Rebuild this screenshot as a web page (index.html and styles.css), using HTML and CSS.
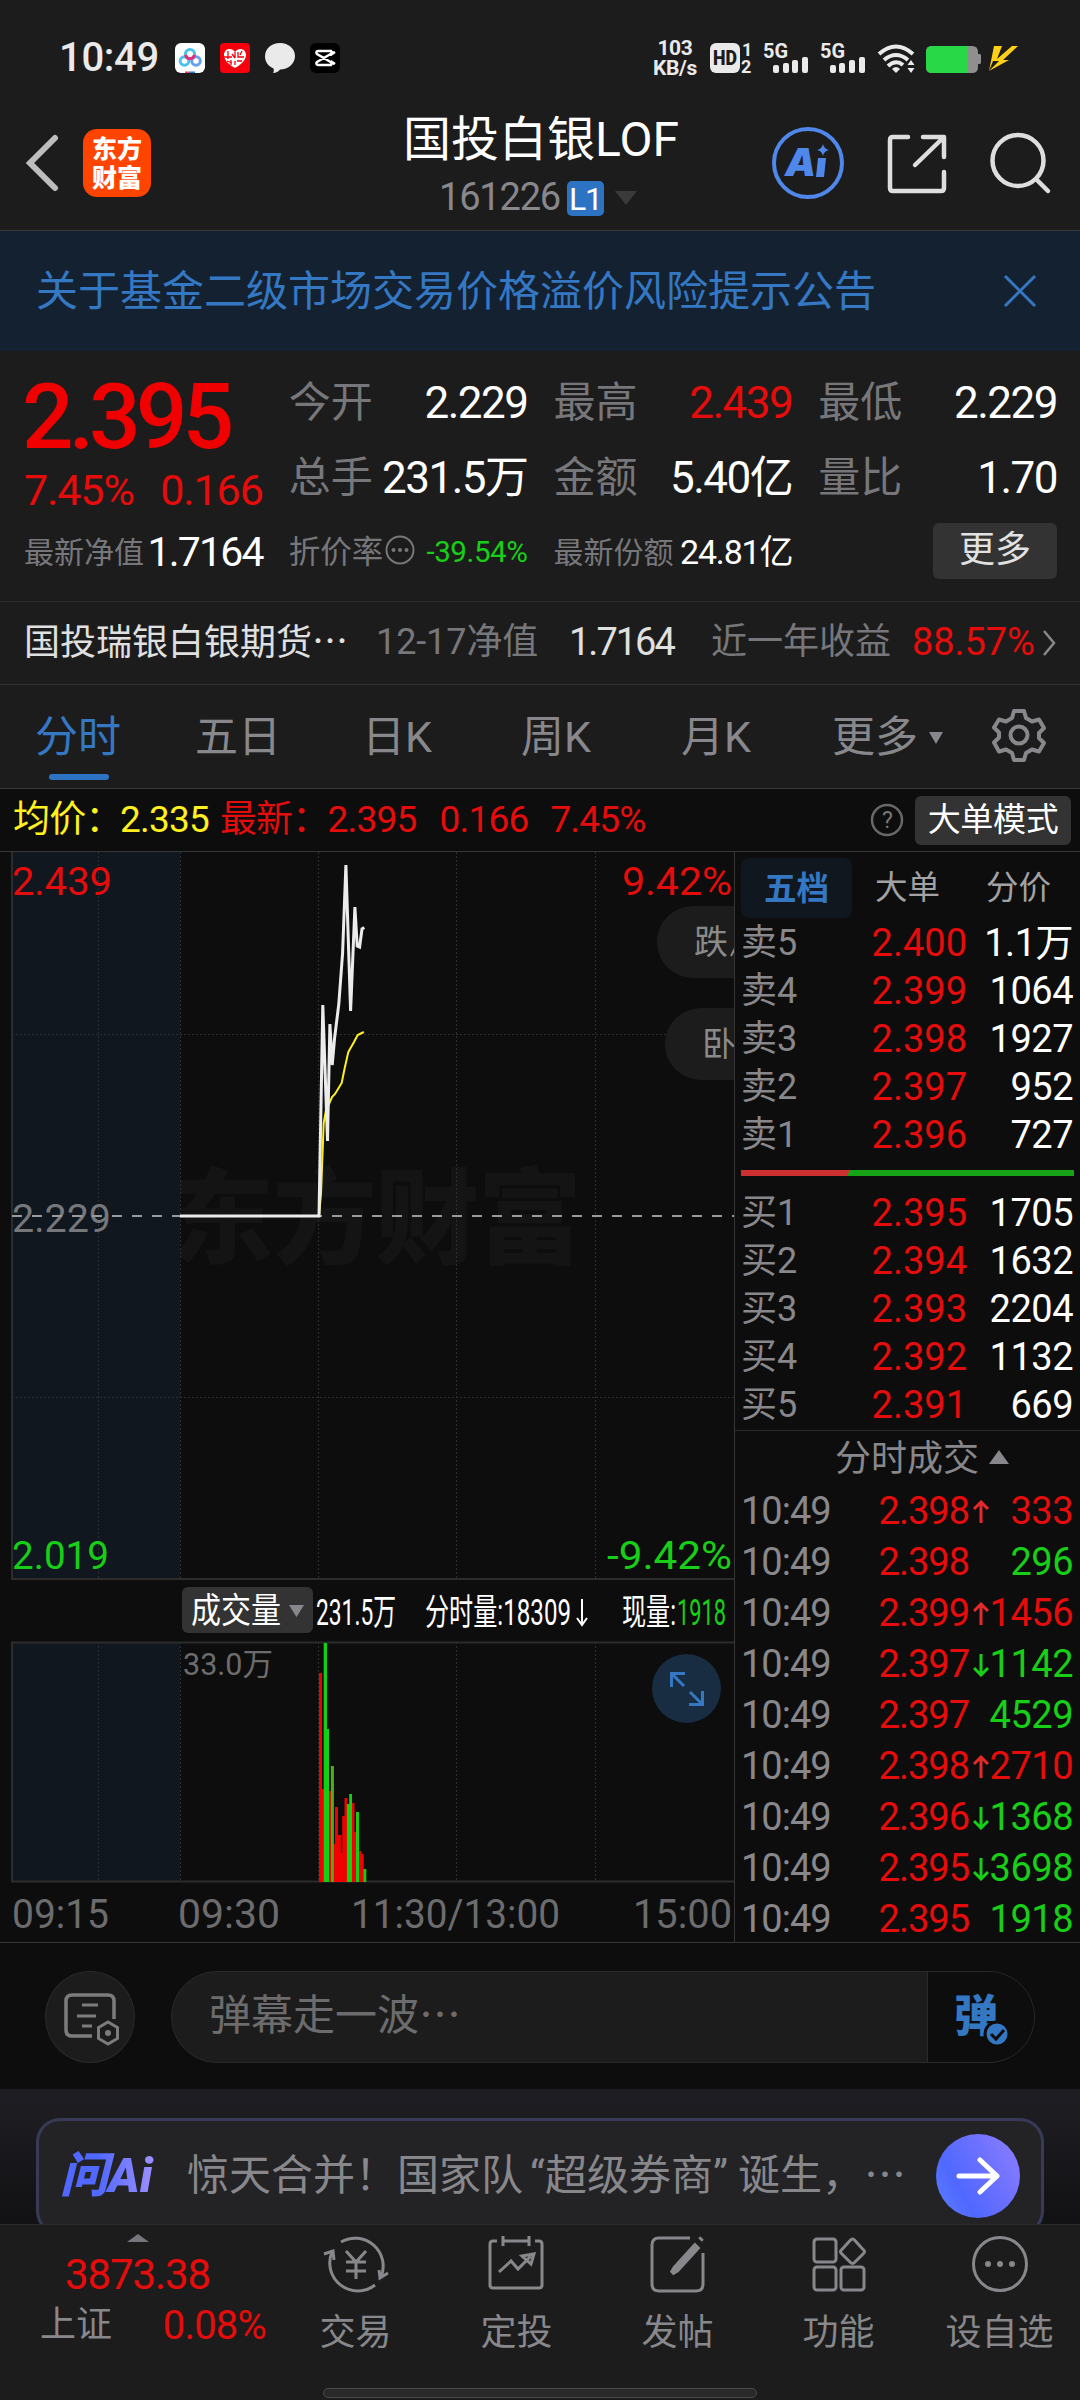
FILE: index.html
```
<!DOCTYPE html>
<html lang="zh-CN">
<head>
    <meta charset="UTF-8">
    <meta name="viewport" content="width=device-width, initial-scale=1.0">
    <title>国投白银LOF</title>
    <link rel="stylesheet" href="styles.css">
</head>
<body>
    <div class="status">
        <span class="clock">10:49</span>
        <svg class="apps" width="166" height="32" viewBox="0 0 166 32">
            <rect x="0" y="1" width="30" height="30" rx="6" fill="#fff"/>
            <g fill="none" stroke-width="3">
                <circle cx="9.5" cy="19" r="4.3" stroke="#4cc3ee"/>
                <circle cx="21" cy="19" r="4.3" stroke="#6aa0f0"/>
                <circle cx="15" cy="12" r="4.6" stroke="#4cc3ee"/>
                <path d="M10.5 13a4.6 4.6 0 0 0 9 0" stroke="#e0307a"/>
            </g>
            <path d="M10 29.5h5v1.5h-5z" fill="#f04060"/>
            <path d="M15 29.5h5v1.5h-5z" fill="#2a7bea"/>
            <rect x="45" y="1" width="30" height="30" rx="4" fill="#f5000c"/>
            <path d="M60 26c-4-2-11-7-11-13 0-7 8-8 11-3 3-5 11-4 11 3 0 6-7 11-11 13z" fill="#fff"/>
            <path d="M49 15h8M53 9v8M57 12l3 4M63 10v5h6M62 19h5M56 18v5M60 10v6M52 19l5 2M60 19v4M67 9l-2 4" stroke="#f5000c" stroke-width="1.3" fill="none"/>
            <path d="M105 1c8.500 0 15 5.600 15 13s-6.500 13.500-15 13.500c-1.500 2-4 3.500-7 3.500 1-1.300 1-2.800.5-4.500C93 24 90 19.500 90 14.500 90 6.600 96.500 1 105 1z" fill="#eaeaea"/>
            <rect x="135" y="1" width="30" height="30" rx="6" fill="#000"/>
            <path d="M160 10l-3 2-1-3h-13c-2 0-2 2-1 3l17 10M160 22l-3-2-1 3h-13c-2 0-2-2-1-3l17-10" fill="none" stroke="#fff" stroke-width="2.500"/>
        </svg>
        <div class="speed">103<br>KB/s</div>
        <svg class="signals" width="312" height="34" viewBox="0 0 312 34">
            <rect x="0" y="2" width="30" height="30" rx="6" fill="#eaeaea"/>
            <text x="3" y="24" class="hd" textLength="24" lengthAdjust="spacingAndGlyphs">HD</text>
            <text x="32" y="15" class="mini">1</text>
            <text x="31" y="32" class="mini">2</text>
            <text x="53" y="17" class="net" textLength="25" lengthAdjust="spacingAndGlyphs">5G</text>
            <text x="110" y="17" class="net" textLength="25" lengthAdjust="spacingAndGlyphs">5G</text>
            <g fill="#eaeaea">
                <rect x="63" y="24" width="6" height="8" rx="2"/><rect x="73" y="22" width="6" height="10" rx="2"/><rect x="82" y="19" width="6" height="13" rx="2"/><rect x="92" y="16" width="6" height="16" rx="2"/>
                <rect x="120" y="24" width="6" height="8" rx="2"/><rect x="129" y="22" width="6" height="10" rx="2"/><rect x="139" y="19" width="6" height="13" rx="2"/><rect x="149" y="16" width="6" height="16" rx="2"/>
                <path d="M182 28q4-4 8 0l-4 4z"/>
                <path d="M201 19l3.500 5h-7zM201 32l3.500-5h-7z"/>
            </g>
            <path d="M169 13q17-15 34 0M174 19q12-10 24 0M178 25q8-7 15-1" fill="none" stroke="#eaeaea" stroke-width="4"/>
            <path d="M222 5h40q6 0 6 6v2h2q1 0 1 2v6q0 2-1 2h-2v3q0 6-6 6h-40q-6 0-6-6V11q0-6 6-6z" fill="#8f8f8f"/>
            <path d="M222 5h36v27h-36q-6 0-6-6V11q0-6 6-6z" fill="#28d846"/>
            <path d="M284 5h8l-5 13 15-13h6l-15 14h6l-20 11 10-10h-6l-4 10z" fill="#ffd015"/>
        </svg>
    </div>

    <div class="header">
        <svg class="back" width="36" height="60" viewBox="0 0 36 60"><path d="M31 5L6 30l25 25" fill="none" stroke="#bdbdbd" stroke-width="6" stroke-linecap="round"/></svg>
        <div class="logo">东方<br>财富</div>
        <div class="title">
            <div class="name">国投白银LOF</div>
            <div class="code">161226<b>L1</b><svg width="24" height="16" viewBox="0 0 24 16"><path d="M1 1h22L12 15z" fill="#3a3a3a"/></svg></div>
        </div>
        <svg class="actions" width="290" height="80" viewBox="0 0 290 80">
            <g fill="#4f88ea">
                <circle cx="38" cy="40" r="34" fill="none" stroke="#4f88ea" stroke-width="4"/>
                <text x="15" y="53" class="ai-small">A</text>
                <path d="M48 35h8l-2 19h-8z"/>
                <path d="M53 21q1 5 6 6-5 1-6 6-1-5-6-6 5-1 6-6z"/>
            </g>
            <g fill="none" stroke="#dedede" stroke-width="4.500" stroke-linecap="round" stroke-linejoin="round">
                <path d="M138 14h-15q-3 0-3 3v48q0 3 3 3h48q3 0 3-3V49M153 14h21v20M173 15l-28 27"/>
                <circle cx="248" cy="37.500" r="25.500"/>
                <path d="M266 56l12 12"/>
            </g>
        </svg>
    </div>

    <div class="banner">
        <span>关于基金二级市场交易价格溢价风险提示公告</span>
        <svg width="34" height="34" viewBox="0 0 34 34"><path d="M2 2l30 30M32 2L2 32" stroke="#3478c4" stroke-width="3"/></svg>
    </div>

    <div class="quote">
        <div class="main-price">
            <div class="price">2.395</div>
            <div class="change"><span>7.45%</span><span>0.166</span></div>
        </div>
        <div class="cell"><label>今开</label><span>2.229</span></div>
        <div class="cell"><label>最高</label><span class="up">2.439</span></div>
        <div class="cell"><label>最低</label><span>2.229</span></div>
        <div class="cell"><label>总手</label><span>231.5万</span></div>
        <div class="cell"><label>金额</label><span>5.40亿</span></div>
        <div class="cell"><label>量比</label><span>1.70</span></div>
        <div class="cell small nav"><label>最新净值</label><span>1.7164</span></div>
        <div class="cell small rate"><label>折价率</label><svg width="30" height="30" viewBox="0 0 30 30"><circle cx="15" cy="15" r="13.500" fill="none" stroke="#77777b" stroke-width="2"/><g fill="#77777b"><circle cx="8.500" cy="15" r="2"/><circle cx="15" cy="15" r="2"/><circle cx="21.500" cy="15" r="2"/></g></svg><span class="down">-39.54%</span></div>
        <div class="cell small share"><label>最新份额</label><span>24.81亿</span></div>
        <div class="cell more"><button>更多</button></div>
    </div>

    <div class="fund">
        <span class="fund-name">国投瑞银白银期货<i>…</i></span>
        <span class="fund-date">12-17净值</span>
        <span class="fund-nav">1.7164</span>
        <span class="fund-year">近一年收益</span>
        <span class="fund-gain up">88.57%</span>
        <svg width="14" height="28" viewBox="0 0 14 28"><path d="M2 2l10 12L2 26" fill="none" stroke="#88888c" stroke-width="2.500"/></svg>
    </div>

    <div class="tabs">
        <span class="tab active">分时</span>
        <span class="tab">五日</span>
        <span class="tab">日K</span>
        <span class="tab">周K</span>
        <span class="tab">月K</span>
        <span class="tab">更多<svg width="16" height="14" viewBox="0 0 16 14"><path d="M1 1h14L8 13z" fill="#88888c"/></svg></span>
        <svg class="gear" width="54" height="54" viewBox="0 0 54 54">
            <g fill="none" stroke="#88888c" stroke-width="4" stroke-linejoin="round">
                <path d="M22 3h10l2 7 6 3.500 7-2 5 8.500-5 5v5l5 5-5 8.500-7-2-6 3.500-2 7H22l-2-7-6-3.500-7 2L2 34.500l5-5v-5l-5-5L7 11.500l7 2 6-3.500z"/>
                <circle cx="27" cy="27" r="8.500"/>
            </g>
        </svg>
    </div>

    <div class="info">
        <span class="avg">均价：</span><span class="avg-num">2.335</span>
        <span class="up">最新：</span><span class="n1 up">2.395</span><span class="n2 up">0.166</span><span class="n3 up">7.45%</span>
        <svg width="34" height="34" viewBox="0 0 34 34"><circle cx="17" cy="17" r="15" fill="none" stroke="#68686a" stroke-width="2.500"/><text x="17" y="25" text-anchor="middle" font-size="23" fill="#77777b">?</text></svg>
        <button>大单模式</button>
    </div>

    <div class="market">
        <div class="chart">
            <svg width="735" height="1090" viewBox="0 852 735 1090">
                <text x="170" y="1256" class="watermark" textLength="412">东方财富</text>
                <rect x="12" y="852" width="168" height="727" fill="#10171f"/>
                <rect x="12" y="1642" width="168" height="240" fill="#10171f"/>
                <g class="grid">
                    <path d="M98.500 852V1579M180.500 852V1579M318.500 852V1579M456.500 852V1579M595.500 852V1579"/>
                    <path d="M98.500 1642V1882M180.500 1642V1882M318.500 1642V1882M456.500 1642V1882M595.500 1642V1882"/>
                    <path d="M12 1034.500H734M12 1397.500H734"/>
                </g>
                <g class="frame">
                    <path d="M12 852V1579H734"/>
                    <path d="M734 1642.500H12V1881.500H734"/>
                </g>
                <rect x="657" y="906" width="120" height="72" rx="36" fill="#1c1c1c"/>
                <rect x="665" y="1008" width="120" height="72" rx="36" fill="#1c1c1c"/>
                <text x="694" y="954" class="pill">跌</text>
                <path d="M731 956l4-8" stroke="#8a8a8a" stroke-width="2"/>
                <text x="702" y="1056" class="pill">卧</text>

                <text x="12" y="895" class="axis red" textLength="100" lengthAdjust="spacingAndGlyphs">2.439</text>
                <text x="622" y="895" class="axis red" textLength="110" lengthAdjust="spacingAndGlyphs">9.42%</text>
                <text x="12" y="1232" class="axis gray" textLength="99" lengthAdjust="spacingAndGlyphs">2.229</text>
                <text x="12" y="1569" class="axis green" textLength="97" lengthAdjust="spacingAndGlyphs">2.019</text>
                <text x="607" y="1569" class="axis green" textLength="125" lengthAdjust="spacingAndGlyphs">-9.42%</text>

                <path d="M12 1216H734" stroke="#9a9a9a" stroke-width="2" stroke-dasharray="10 10"/>
                <polyline class="avg-line" points="180,1216 319,1216 321,1194 323.7,1123 326,1110 329,1104 332,1097 335,1094 341.7,1083 344.5,1069 348.3,1052 354,1042 357.7,1035 363.8,1032"/>
                <polyline class="price-line" points="180,1216 319,1216 322.8,1005 327.5,1141 329.9,1024 332.2,1065 334.6,1038 338.8,1004 342.6,953 345.9,865 350.6,1011 354.9,907 357.2,946 359.6,947 362,929 364.3,927.5"/>

                <rect x="182" y="1587" width="131" height="46" rx="6" fill="#333"/>
                <text x="191" y="1623" class="vol-title" textLength="90" lengthAdjust="spacingAndGlyphs">成交量</text>
                <path d="M289 1605h15l-7.500 12z" fill="#88888c"/>
                <text x="316" y="1625" class="vol" textLength="80" lengthAdjust="spacingAndGlyphs">231.5万</text>
                <text x="425" y="1625" class="vol" textLength="146" lengthAdjust="spacingAndGlyphs">分时量:18309</text>
                <path d="M582 1599v25M577 1618l5 7 5-7" fill="none" stroke="#fff" stroke-width="2"/>
                <text x="622" y="1625" class="vol" textLength="54" lengthAdjust="spacingAndGlyphs">现量:</text>
                <text x="677" y="1625" class="vol green" textLength="49" lengthAdjust="spacingAndGlyphs">1918</text>

                <text x="183" y="1675" class="vol-max" textLength="90" lengthAdjust="spacingAndGlyphs">33.0万</text>
                <g fill="#f00000">
                    <path d="M319 1673h3v209h-3zM321.800 1789h2.500v93h-2.500zM328.900 1791h2.500v91h-2.500zM333.500 1844h2.500v38h-2.500zM335 1807h3v75h-3zM337.900 1835h3v47h-3zM340.500 1853h2.500v29h-2.500zM342.200 1816h2.800v66h-2.800zM344.500 1798h2.500v84h-2.500zM352 1803h2.500v79h-2.500zM354 1832h2.500v50h-2.500zM359 1851h2.500v31h-2.500zM361.300 1854h2.500v28h-2.500z"/>
                </g>
                <g fill="#12d012">
                    <path d="M323.700 1643h3.300v239h-3.300zM326.800 1729h2.200v153h-2.200zM346.900 1804h2.500v78h-2.500zM349.200 1794h2.800v88h-2.800zM356 1812h3v70h-3zM363.500 1869h2.800v13h-2.800z"/>
                    <path d="M330.900 1766h3v116h-3z" fill="#4fae1c"/>
                </g>
                <circle cx="686.500" cy="1688.500" r="34.500" fill="#182c42"/>
                <path d="M671.500 1687v-13.500H685M672 1674l12 12M702.500 1691v13.500H689M702 1704l-12-12" fill="none" stroke="#3478c4" stroke-width="3"/>

                <text x="12" y="1928" class="axis time" textLength="97" lengthAdjust="spacingAndGlyphs">09:15</text>
                <text x="178" y="1928" class="axis time" textLength="102" lengthAdjust="spacingAndGlyphs">09:30</text>
                <text x="351" y="1928" class="axis time" textLength="209" lengthAdjust="spacingAndGlyphs">11:30/13:00</text>
                <text x="633" y="1928" class="axis time" textLength="99" lengthAdjust="spacingAndGlyphs">15:00</text>
            </svg>
        </div>

        <div class="side">
            <div class="side-tabs">
                <span class="active">五档</span>
                <span>大单</span>
                <span>分价</span>
            </div>
            <div class="book">
                <div class="row"><label>卖5</label><span class="up">2.400</span><em>1.1万</em></div>
                <div class="row"><label>卖4</label><span class="up">2.399</span><em>1064</em></div>
                <div class="row"><label>卖3</label><span class="up">2.398</span><em>1927</em></div>
                <div class="row"><label>卖2</label><span class="up">2.397</span><em>952</em></div>
                <div class="row"><label>卖1</label><span class="up">2.396</span><em>727</em></div>
            </div>
            <div class="ratio"></div>
            <div class="book">
                <div class="row"><label>买1</label><span class="up">2.395</span><em>1705</em></div>
                <div class="row"><label>买2</label><span class="up">2.394</span><em>1632</em></div>
                <div class="row"><label>买3</label><span class="up">2.393</span><em>2204</em></div>
                <div class="row"><label>买4</label><span class="up">2.392</span><em>1132</em></div>
                <div class="row"><label>买5</label><span class="up">2.391</span><em>669</em></div>
            </div>
            <div class="deals-title">分时成交<svg width="22" height="14" viewBox="0 0 22 14"><path d="M1 14h20L11 0z" fill="#88888c"/></svg></div>
            <div class="deals">
                <div class="row"><label>10:49</label><span class="up">2.398</span><svg class="arrow" viewBox="0 0 16 24"><path d="M8 23V2M1 9l7-7 7 7"/></svg><em class="up">333</em></div>
                <div class="row"><label>10:49</label><span class="up">2.398</span><svg class="arrow" viewBox="0 0 16 24"></svg><em class="down">296</em></div>
                <div class="row"><label>10:49</label><span class="up">2.399</span><svg class="arrow" viewBox="0 0 16 24"><path d="M8 23V2M1 9l7-7 7 7"/></svg><em class="up">1456</em></div>
                <div class="row"><label>10:49</label><span class="up">2.397</span><svg class="arrow fall" viewBox="0 0 16 24"><path d="M8 1v21M1 15l7 7 7-7"/></svg><em class="down">1142</em></div>
                <div class="row"><label>10:49</label><span class="up">2.397</span><svg class="arrow" viewBox="0 0 16 24"></svg><em class="down">4529</em></div>
                <div class="row"><label>10:49</label><span class="up">2.398</span><svg class="arrow" viewBox="0 0 16 24"><path d="M8 23V2M1 9l7-7 7 7"/></svg><em class="up">2710</em></div>
                <div class="row"><label>10:49</label><span class="up">2.396</span><svg class="arrow fall" viewBox="0 0 16 24"><path d="M8 1v21M1 15l7 7 7-7"/></svg><em class="down">1368</em></div>
                <div class="row"><label>10:49</label><span class="up">2.395</span><svg class="arrow fall" viewBox="0 0 16 24"><path d="M8 1v21M1 15l7 7 7-7"/></svg><em class="down">3698</em></div>
                <div class="row"><label>10:49</label><span class="up">2.395</span><svg class="arrow" viewBox="0 0 16 24"></svg><em class="down">1918</em></div>
            </div>
        </div>
    </div>

    <div class="danmu">
        <div class="danmu-set">
            <svg width="58" height="54" viewBox="0 0 58 54">
                <g fill="none" stroke="#7c7c7c" stroke-width="3.500">
                    <path d="M29 44H9q-6 0-6-6V9q0-6 6-6h36q6 0 6 6v18"/>
                    <path d="M19 13h16M14 24h19M19 34h10" stroke-width="3"/>
                    <path d="M45 30l9.500 5.500v11L45 52l-9.500-5.500v-11z" stroke-width="3"/>
                </g>
                <circle cx="45" cy="41" r="3" fill="#7c7c7c"/>
            </svg>
        </div>
        <div class="danmu-input">
            <span>弹幕走一波<i>…</i></span>
            <div class="danmu-send">
                <svg width="56" height="56" viewBox="0 0 56 56">
                    <text x="1" y="43" class="dan">弹</text>
                    <circle cx="44" cy="45" r="13.500" fill="#0d0d0d"/>
                    <circle cx="44" cy="45" r="10.500" fill="#3478c4"/>
                    <path d="M38 45l5 5 8-9" fill="none" stroke="#0d0d0d" stroke-width="3"/>
                </svg>
            </div>
        </div>
    </div>

    <div class="ask">
        <div class="ask-card">
            <span class="ask-logo">问Ai</span>
            <span class="ask-text">惊天合并！国家队<q>超级券商</q>诞生，<i>…</i></span>
            <div class="ask-go"><svg width="44" height="40" viewBox="0 0 44 40"><path d="M3 20h38M24 4l17 16-17 16" fill="none" stroke="#fff" stroke-width="5" stroke-linecap="round" stroke-linejoin="round"/></svg></div>
        </div>
    </div>

    <div class="bottom">
        <div class="index">
            <svg width="22" height="8" viewBox="0 0 22 8"><path d="M0 8h22L11 0z" fill="#77777b"/></svg>
            <div class="index-num up">3873.38</div>
            <div class="index-row"><span>上证</span><span class="up">0.08%</span></div>
        </div>
        <div class="nav-item">
            <svg viewBox="0 0 66 60">
                <path d="M18 8A28 28 0 0 1 58 43M52 51A28 28 0 0 1 9 18M1 20l9-3 1 9M65 39l-8 5-1-8"/>
                <path d="M23 17l10 11 10-11M33 28v17M23 28h20M23 37h20"/>
            </svg>交易
        </div>
        <div class="nav-item">
            <svg viewBox="0 0 66 60">
                <path d="M13 7H9q-3 0-3 3v41q0 3 3 3h46q3 0 3-3V10q0-3-3-3h-4M19 2v10M45 2v10M19 7h26"/>
                <path d="M15 38l12-11 7 8 13-13M38 22l12-2-3 10z"/>
            </svg>定投
        </div>
        <div class="nav-item">
            <svg viewBox="0 0 66 60">
                <path d="M45 4H14q-7 0-7 7v39q0 7 7 7h37q7 0 7-7V19"/>
                <path d="M50 12L30 34l-3 5 5-3 20-22zM55 6l2-2" stroke-width="5"/>
            </svg>发帖
        </div>
        <div class="nav-item">
            <svg viewBox="0 0 66 60">
                <rect x="8" y="5" width="22" height="23" rx="3"/>
                <rect x="8" y="33" width="22" height="23" rx="3"/>
                <rect x="35" y="33" width="23" height="23" rx="3"/>
                <path d="M44.500 6q2-2 4 0l9 10q2 1.500 0 3.500l-9 9q-2 2-4 0l-9-9q-2-2 0-3.500z"/>
            </svg>功能
        </div>
        <div class="nav-item">
            <svg viewBox="0 0 66 60">
                <circle cx="33" cy="30" r="26.500"/>
                <g fill="#88888c" stroke="none"><circle cx="21" cy="30" r="3"/><circle cx="33" cy="30" r="3"/><circle cx="45" cy="30" r="3"/></g>
            </svg>设自选
        </div>
        <div class="home-bar"></div>
    </div>
</body>
</html>
```

FILE: styles.css
```
* {
    box-sizing: border-box;
}
body {
    margin: 0;
    width: 1080px;
    height: 2400px;
    overflow: hidden;
    background: #0d0d0d;
    color: #fff;
    font-family: Roboto, "Noto Sans CJK SC", sans-serif;
    line-height: 1.2;
    white-space: nowrap;
}
svg {
    display: block;
    flex: none;
}
i, em {
    font-style: normal;
}
i {
    font-family: "Noto Sans CJK SC", sans-serif;
    line-height: 1;
}
button {
    border: none;
    background: #333;
    color: #fff;
    font-family: inherit;
    line-height: 1.2;
    padding: 0;
    border-radius: 6px;
}
.up {
    color: #e60c0c;
}
.down {
    color: #18cf18;
}

/* status bar */
.status {
    height: 115px;
    padding-left: 59px;
    display: flex;
    align-items: center;
    background: #1c1c1c;
}
.clock {
    width: 116px;
    font-size: 40px;
    font-weight: 500;
    color: #eaeaea;
    letter-spacing: -0.3px;
}
.speed {
    width: 46px;
    margin-left: 311px;
    margin-right: 12px;
    font-size: 21px;
    line-height: 20px;
    font-weight: 700;
    letter-spacing: -0.3px;
    color: #eaeaea;
    text-align: center;
}
.signals {
    overflow: visible;
}
.hd {
    font-size: 20px;
    font-weight: 900;
    fill: #1c1c1c;
}
.mini {
    font-size: 18px;
    font-weight: 700;
    fill: #eaeaea;
}
.net {
    font-size: 21px;
    font-weight: 700;
    fill: #eaeaea;
}

/* header */
.header {
    height: 116px;
    display: flex;
    background: #1c1c1c;
    border-bottom: 1px solid #363636;
}
.back {
    margin: 18px 0 0 24px;
}
.logo {
    width: 68px;
    height: 68px;
    margin: 14px 0 0 23px;
    padding-top: 6px;
    border-radius: 14px;
    background: #ff4400;
    font-size: 25px;
    line-height: 29px;
    font-weight: 900;
    text-align: center;
}
.title {
    width: 520px;
    margin-left: 130px;
    text-align: center;
}
.name {
    font-size: 48px;
    line-height: 50px;
}
.code {
    display: flex;
    justify-content: center;
    align-items: center;
    height: 36px;
    margin-top: 15px;
    padding-right: 5px;
    font-size: 38px;
    letter-spacing: -1.2px;
    color: #88888c;
}
.code b {
    width: 37px;
    height: 35px;
    margin: 0 10px 0 7px;
    border-radius: 5px;
    background: #2d73c4;
    color: #fff;
    font-size: 32px;
    line-height: 36px;
    font-weight: 400;
}
.actions {
    margin: 8px 0 0 -31px;
}
.ai-small {
    font-family: Inter, sans-serif;
    font-size: 39px;
    font-weight: 900;
    font-style: italic;
}

/* notice */
.banner {
    height: 120px;
    padding: 0 43px 0 36px;
    display: flex;
    align-items: center;
    justify-content: space-between;
    background: #142130;
    color: #3478c4;
    font-size: 42px;
}
.banner span {
    padding-top: 3px;
}

/* quote */
.quote {
    height: 251px;
    padding: 15px 23px 0 24px;
    display: grid;
    grid-template-columns: repeat(4, 1fr);
    grid-template-rows: 75px 75px 73px;
    column-gap: 26px;
    background: #1c1c1c;
    border-bottom: 1px solid #2b2b2b;
}
.main-price {
    grid-row: span 2;
    color: #f00000;
}
.price {
    margin-left: -2px;
    padding-top: 6px;
    height: 87px;
    font-size: 91px;
    line-height: 91px;
    font-weight: 500;
    letter-spacing: -5px;
}
.change {
    display: flex;
    justify-content: space-between;
    margin-top: 12px;
    font-size: 43px;
    line-height: 50px;
    letter-spacing: -1.1px;
    color: #e60c0c;
}
.cell {
    display: flex;
    align-items: center;
    justify-content: space-between;
    font-size: 42px;
}
.cell > span {
    font-size: 44px;
    letter-spacing: -1.5px;
}
.cell label {
    color: #77777b;
}
.small label {
    font-size: 30px;
}
.nav > span {
    font-size: 41px;
    letter-spacing: -1.8px;
}
.rate label {
    font-size: 31.500px;
}
.rate svg {
    margin: -6px 0 0 2px;
}
.rate > span {
    margin-left: auto;
    font-size: 29.500px;
    letter-spacing: -0.4px;
}
.share > span {
    font-size: 34px;
    letter-spacing: -1.2px;
}
.more {
    justify-content: flex-end;
}
.more button {
    width: 124px;
    height: 56px;
    margin-top: -4px;
    font-size: 36px;
    color: #e2e2e2;
}

/* fund row */
.fund {
    height: 83px;
    padding: 0 24px 0 24px;
    display: flex;
    align-items: center;
    background: #1c1c1c;
    border-bottom: 1px solid #333;
    font-size: 36px;
    color: #e0e0e0;
}
.fund-name {
    width: 352px;
}
.fund-date {
    width: 193px;
    color: #77777b;
    letter-spacing: -0.1px;
}
.fund-nav {
    width: 142px;
    font-size: 38px;
    letter-spacing: -2px;
}
.fund-year {
    width: 201px;
    color: #77777b;
}
.fund-gain {
    flex: 1;
    font-size: 38px;
    letter-spacing: -0.1px;
}

/* chart tabs */
.tabs {
    height: 104px;
    padding: 0 34px 0 35px;
    display: grid;
    grid-template-columns: 160px 167px 159px 160px 151px 160px 54px;
    align-items: center;
    background: #1c1c1c;
    border-bottom: 1px solid #363636;
    font-size: 43px;
    color: #88888c;
}
.tab {
    position: relative;
    display: flex;
    align-items: center;
    gap: 10px;
    height: 103px;
    padding-top: 2px;
}
.tab.active {
    color: #3478c4;
}
.tab.active::after {
    content: "";
    position: absolute;
    left: 14px;
    bottom: 8px;
    width: 60px;
    height: 6px;
    border-radius: 3px;
    background: #2d73c4;
}
.gear {
    margin-top: -3px;
}

/* info row */
.info {
    height: 63px;
    padding: 0 9px 0 13px;
    display: flex;
    align-items: center;
    border-bottom: 1px solid #363636;
    font-size: 37px;
    letter-spacing: -0.8px;
}
.avg, .avg-num {
    color: #fff01e;
}
.avg {
    width: 107px;
}
.avg-num {
    width: 100px;
}
.info .n1 {
    width: 112px;
    margin-left: -1px;
}
.info .n2 {
    width: 111px;
}
.info .n3 {
    width: 320px;
}
.info button {
    width: 156px;
    height: 49px;
    margin-left: 11px;
    font-size: 33px;
    letter-spacing: -0.3px;
}

.market {
    display: flex;
    height: 1091px;
    border-bottom: 1px solid #363636;
}
.chart {
    width: 734px;
    overflow: hidden;
}
.grid path {
    fill: none;
    stroke: #2c2e30;
    stroke-width: 1;
    stroke-dasharray: 2 2;
}
.frame path {
    fill: none;
    stroke: #2c2c2c;
    stroke-width: 2;
}
.watermark {
    font-size: 104px;
    font-weight: 900;
    fill: #141414;
}
.pill {
    font-size: 34px;
    fill: #8a8a8a;
}
.axis {
    font-size: 39px;
}
.red {
    fill: #e60c0c;
}
.gray {
    fill: #77777b;
}
.axis.time {
    font-size: 41px;
    fill: #6c6c6e;
}
.vol-title {
    font-size: 35px;
    fill: #fff;
}
.vol {
    font-size: 36px;
    fill: #fff;
}
.green, .vol.green {
    fill: #18cf18;
}
.vol-max {
    font-size: 31px;
    fill: #6c6c6e;
}
.price-line {
    fill: none;
    stroke: #ececec;
    stroke-width: 3;
}
.avg-line {
    fill: none;
    stroke: #fff01e;
    stroke-width: 2;
}

/* order book */
.side {
    width: 346px;
    border-left: 1px solid #363636;
}
.side-tabs {
    display: flex;
    align-items: center;
    height: 60px;
    margin: 6px 6px 0;
    font-size: 32.500px;
    color: #a2a2a4;
}
.side-tabs span {
    width: 111px;
    text-align: center;
    line-height: 63px;
}
.side-tabs .active {
    height: 60px;
    border-radius: 8px;
    background: #10171f;
    color: #3478c4;
    font-weight: 700;
}
.book {
    padding-top: 2px;
}
.row {
    display: flex;
    align-items: center;
    height: 48px;
    padding: 0 7px 0 6px;
    font-size: 38px;
}
.row label {
    width: 85px;
    font-size: 36px;
    color: #88888c;
}
.row span {
    flex: none;
    width: 141px;
    text-align: right;
}
.row em {
    flex: 1;
    text-align: right;
    letter-spacing: -0.5px;
}
.ratio {
    height: 6px;
    margin: 10px 6px 12px;
    background: linear-gradient(120deg, #cd3030 32.500%, #16a316 32.500%);
}
.deals-title {
    display: flex;
    align-items: center;
    justify-content: center;
    gap: 9px;
    height: 59px;
    padding-left: 30px;
    margin-bottom: -3px;
    border-top: 1px solid #2b2b2b;
    font-size: 36px;
    color: #88888c;
}
.deals-title svg {
    margin-top: -6px;
}
.deals .row {
    height: 51px;
    letter-spacing: -1px;
}
.deals .row label {
    font-size: 38px;
}
.deals .row span {
    width: 143px;
}
.arrow {
    width: 16px;
    height: 24px;
    margin-left: 4px;
    fill: none;
    stroke: #e62a2a;
    stroke-width: 3;
}
.arrow.fall {
    stroke: #18cf18;
}

/* danmu */
.danmu {
    display: flex;
    align-items: center;
    gap: 36px;
    height: 146px;
    padding: 1px 45px 0;
}
.danmu-set {
    display: flex;
    align-items: center;
    justify-content: center;
    width: 90px;
    height: 92px;
    border-radius: 50%;
    border: 1px solid #2a2a2a;
    background: #1c1c1c;
}
.danmu-set svg {
    margin: 4px 0 0 3px;
}
.danmu-input {
    flex: 1;
    display: flex;
    align-items: center;
    justify-content: space-between;
    height: 92px;
    padding-left: 37px;
    border: 1px solid #2a2a2a;
    border-radius: 46px;
    background: #1c1c1c;
    overflow: hidden;
    font-size: 42px;
    color: #6c6c6e;
}
.danmu-send {
    display: flex;
    align-items: center;
    width: 107px;
    height: 90px;
    padding-left: 25px;
    border-left: 1px solid #2a2a2a;
    background: #0d0d0d;
}
.dan {
    font-size: 44px;
    font-weight: 900;
    fill: #3478c4;
}

/* ask ai */
.ask {
    height: 135px;
    padding: 29px 36px 0;
    background: linear-gradient(#1e1e24, #121214);
    overflow: hidden;
}
.ask-card {
    display: flex;
    align-items: center;
    height: 117px;
    padding: 0 21px 2px;
    border: 3px solid #383a58;
    border-bottom-color: #3a3a3c;
    border-radius: 24px;
    background: #232326;
}
.ask-logo {
    width: 127px;
    font-size: 48px;
    font-weight: 900;
    font-style: italic;
    color: transparent;
    background: linear-gradient(90deg, #5068ff 30%, #a896ff 80%);
    background-clip: text;
    -webkit-background-clip: text;
}
.ask-text {
    flex: 1;
    padding-top: 2px;
    font-size: 42px;
    color: #88888c;
}
.ask-text q {
    quotes: "“" "”";
    padding: 0 10px 0 7px;
}
.ask-go {
    display: flex;
    align-items: center;
    justify-content: center;
    width: 84px;
    height: 84px;
    border-radius: 50%;
    background: linear-gradient(60deg, #5a80ff, #5068ff 30%, #6a70ff 60%, #9080ff);
}

/* bottom bar */
.bottom {
    position: relative;
    display: flex;
    height: 176px;
    background: #1c1c1c;
    border-top: 1px solid #2b2b2b;
}
.index {
    width: 275px;
    padding-top: 9px;
}
.index svg {
    margin-left: 127px;
}
.index-num {
    margin-top: 8px;
    text-align: center;
    font-size: 42px;
    line-height: 50px;
    letter-spacing: -1.1px;
}
.index-row {
    display: flex;
    justify-content: space-between;
    padding: 0 9px 0 40px;
    font-size: 36px;
    line-height: 51px;
    color: #88888c;
}
.index-row .up {
    font-size: 40px;
    letter-spacing: -0.8px;
}
.nav-item {
    width: 161px;
    display: flex;
    flex-direction: column;
    align-items: center;
    padding-top: 9px;
    font-size: 36px;
    line-height: 50px;
    color: #88888c;
}
.nav-item svg {
    width: 66px;
    height: 60px;
    margin-bottom: 14px;
    fill: none;
    stroke: #88888c;
    stroke-width: 3;
}
.home-bar {
    position: absolute;
    left: 323px;
    bottom: 2px;
    width: 434px;
    height: 10px;
    border: 1px solid #4a4a4a;
    border-radius: 5px;
    background: #292929;
}
```
